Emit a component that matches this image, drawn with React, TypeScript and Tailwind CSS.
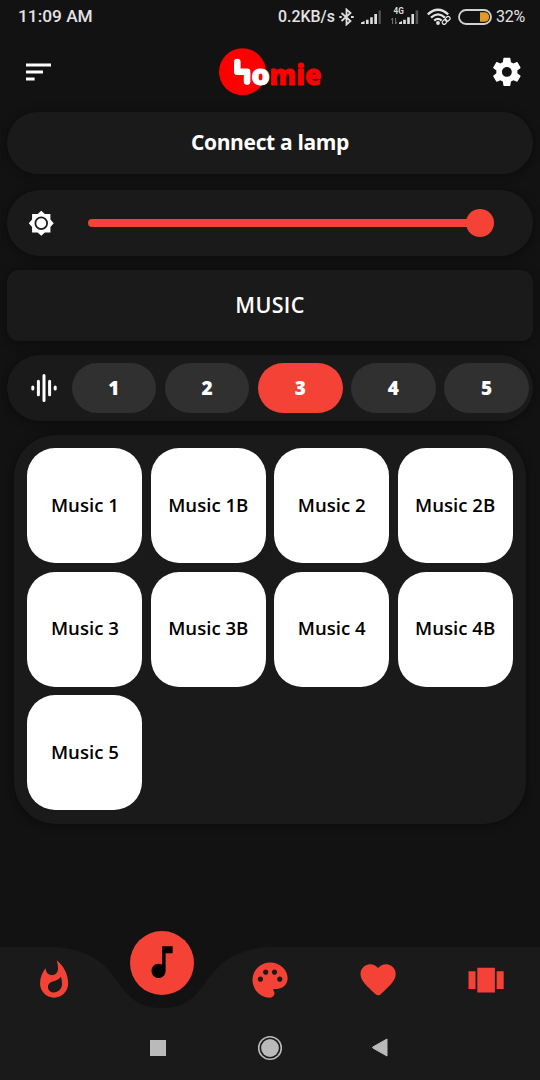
import type { ReactNode } from "react";
import { MdMusicNote } from "react-icons/md";

const levels = [1, 2, 3, 4, 5];
const tracks = ["Music 1", "Music 1B", "Music 2", "Music 2B", "Music 3", "Music 3B", "Music 4", "Music 4B", "Music 5"];

const CARD_SHADOW = "shadow-[0_1px_8px_2px_rgba(0,0,0,0.28)]";

function Signal() {
  return (
    <svg width="21" height="16" viewBox="0 0 21 16" fill="#dedede">
      <path d="M0 15v-1.6L3.6 12v3zM5 10.8h2.6V15H5zM9.2 8.2h2.6V15H9.2zM13.3 5h2.7v10h-2.7z" />
      <path d="M17.6 1.4h2.2V15h-2.2z" fill="#555" />
    </svg>
  );
}

function StatusBar() {
  return (
    <div className="flex h-[34px] shrink-0 items-center pr-[14px] pl-[18px] font-['Roboto',sans-serif] text-[#e2e2e2]">
      <span className="w-[260px] text-[17.3px] font-medium">11:09 AM</span>
      <span className="w-[61px] text-[15.9px] font-medium whitespace-nowrap">0.2KB/s</span>
      <svg className="w-[15px]" height="18" viewBox="0 0 15 18" fill="none" stroke="#dedede" strokeWidth="1.8">
        <path d="M2.5 5l9 8-4 3.5V1.5l4 3.5-9 8" />
        <path d="M.3 9h2.4M12 9h2.7" strokeWidth="2" />
      </svg>
      <span className="ml-[7px]"><Signal /></span>
      <svg className="ml-[8px]" width="31" height="20" viewBox="0 0 31 20" fill="#dedede">
        <text x="3.6" y="7.4" fontSize="8.2" fontWeight="700" fontFamily="Roboto">4G</text>
        <path d="M2.6 17V11M1.4 12.8L2.6 11M5.6 11v6M5.6 17l1.2-1.8" stroke="#777" fill="none" />
        <path d="M9 17v-1.6l3-1.4v3zM13.2 12.8h2.6V17h-2.6zM17.2 10.2h2.6V17h-2.6zM21.4 7h2.6v10h-2.6z" />
        <path d="M25.6 3.4h2.6V17h-2.6z" fill="#555" />
      </svg>
      <svg className="ml-[6px]" width="24" height="18" viewBox="0 0 24 18" fill="none" stroke="#e2e2e2">
        <path d="M.8 6.4Q11 -2.8 21.2 6.4" strokeWidth="2.3" />
        <path d="M4 9.6Q11 3.2 18 9.6" strokeWidth="2.3" />
        <path d="M7.2 12.6Q11 9.2 14.6 12.6" strokeWidth="2.3" />
        <circle cx="11" cy="15" r="1.9" fill="#e2e2e2" stroke="none" />
        <g transform="rotate(-45 19 12.5)" strokeWidth="1.2">
          <rect x="14.4" y="10.6" width="5.3" height="3.8" rx="1.9" />
          <rect x="18.6" y="10.6" width="5.3" height="3.8" rx="1.9" />
        </g>
      </svg>
      <svg className="ml-[7px]" width="34" height="16" viewBox="0 0 34 16">
        <rect x="1" y="1" width="32" height="14" rx="7" fill="none" stroke="#d2d2d2" strokeWidth="1.8" />
        <path d="M22 3.2h4.4a4.8 4.8 0 0 1 0 9.6H22z" fill="#e39a25" />
      </svg>
      <span className="ml-[4px] text-[16px] tracking-[-0.3px] whitespace-nowrap">32%</span>
    </div>
  );
}

function Logo() {
  return (
    <svg
      className="-ml-[2px] overflow-visible"
      width="104"
      height="48"
      viewBox="218 47.5 104 48"
      fontFamily="'Open Sans', sans-serif"
      fontWeight="800"
    >
      <circle cx="242.5" cy="71.3" r="23.5" fill="#fe0000" />
      <path d="M237.3 61.5v9.8h9.8v9.8" fill="none" stroke="#fff" strokeWidth="6.6" strokeLinecap="round" strokeLinejoin="round" />
      <text x="251.2" y="84.2" fontSize="29" fill="#fff" stroke="#fff" strokeWidth="0.8" textLength="18.8" lengthAdjust="spacingAndGlyphs">o</text>
      <text x="269.6" y="84.2" fontSize="28.5" fill="#fe0000" stroke="#fe0000" strokeWidth="0.8" strokeLinejoin="round" textLength="52" lengthAdjust="spacingAndGlyphs">mie</text>
    </svg>
  );
}

function MenuIcon() {
  return (
    <svg className="ml-1" width="25" height="18" viewBox="0 0 25 18" fill="#fff">
      <path d="M0 .5h25v3H0zM0 7.5h17v3H0zM0 14.5h8.6v3H0z" />
    </svg>
  );
}

function GearIcon() {
  return (
    <svg width="33.75" height="33.75" viewBox="0 0 24 24" fill="#fff">
      <path d="M19.43 12.98c.04-.32.07-.64.07-.98s-.03-.66-.07-.98l2.11-1.65c.19-.15.24-.42.12-.64l-2-3.46c-.12-.22-.39-.3-.61-.22l-2.49 1c-.52-.4-1.08-.73-1.69-.98l-.38-2.65C14.46 2.18 14.25 2 14 2h-4c-.25 0-.46.18-.49.42l-.38 2.65c-.61.25-1.17.59-1.69.98l-2.49-1c-.23-.09-.49 0-.61.22l-2 3.46c-.13.22-.07.49.12.64l2.11 1.65c-.04.32-.07.65-.07.98s.03.66.07.98l-2.11 1.65c-.19.15-.24.42-.12.64l2 3.46c.12.22.39.3.61.22l2.49-1c.52.4 1.08.73 1.69.98l.38 2.65c.03.24.24.42.49.42h4c.25 0 .46-.18.49-.42l.38-2.65c.61-.25 1.17-.59 1.69-.98l2.49 1c.23.09.49 0 .61-.22l2-3.46c.12-.22.07-.49-.12-.64l-2.11-1.65zM12 15.5c-1.93 0-3.5-1.57-3.5-3.5s1.57-3.5 3.5-3.5 3.5 1.57 3.5 3.5-1.57 3.5-3.5 3.5z" />
    </svg>
  );
}

function BrightnessIcon() {
  return (
    <svg width="26.5" height="26.5" viewBox="0 0 24 24" fill="#fff">
      <path d="M20.3 8.69V3.7h-4.99L12 .69 8.69 3.7H3.7v4.99L.69 12l3.01 3.31v4.99h4.99L12 23.31l3.31-3.01h4.99v-4.99L23.31 12z" />
      <circle cx="12" cy="12" r="5.3" fill="none" stroke="#1a1a1a" strokeWidth="1.6" />
    </svg>
  );
}

function WaveIcon() {
  return (
    <svg width="26" height="28" viewBox="0 0 26 28" stroke="#fff" strokeWidth="3" strokeLinecap="round">
      <path d="M1.8 13v2M7.4 7.2v13.6M13 1.5v25M18.6 7.2v13.6M24.2 13v2" />
    </svg>
  );
}

function NavIcon({ children }: { children: ReactNode }) {
  return (
    <div className="flex flex-1 justify-center">
      <svg width="42.2" height="42.2" viewBox="0 0 24 24" fill="#f44336">{children}</svg>
    </div>
  );
}

function BottomBar() {
  return (
    <div className="relative mt-auto h-[133px] shrink-0">
      <svg className="absolute inset-0" width="540" height="133" viewBox="0 0 540 133">
        <path d="M0 0H54C129.6 5 108 61 162 61S194.4 5 270 0H540V133H0Z" fill="#1a1a1a" />
      </svg>
      <div className="relative flex h-[67px] items-center">
        <NavIcon>
          <path d="M13.5.67s.74 2.65.74 4.8c0 2.06-1.35 3.73-3.41 3.73-2.07 0-3.63-1.67-3.63-3.73l.03-.36C5.21 7.51 4 10.62 4 14c0 4.42 3.58 8 8 8s8-3.58 8-8C20 8.61 17.41 3.8 13.5.67zM11.71 19c-1.78 0-3.22-1.4-3.22-3.14 0-1.62 1.05-2.76 2.81-3.12 1.77-.36 3.6-1.21 4.62-2.58.39 1.29.59 2.65.59 4.04 0 2.65-2.15 4.8-4.8 4.8z" />
        </NavIcon>
        <div className="flex flex-1 justify-center">
          <div className="mb-[36px] flex size-[64px] items-center justify-center rounded-full bg-[#f44336]">
            <MdMusicNote size={42.2} color="#000" />
          </div>
        </div>
        <NavIcon>
          <path d="M12 2C6.49 2 2 6.49 2 12s4.49 10 10 10c1.38 0 2.5-1.12 2.5-2.5 0-.61-.23-1.2-.64-1.67-.08-.1-.13-.21-.13-.33 0-.28.22-.5.5-.5H16c3.31 0 6-2.69 6-6 0-4.96-4.49-9-10-9zm5.5 11c-.83 0-1.5-.67-1.5-1.5s.67-1.5 1.5-1.5 1.5.67 1.5 1.5-.67 1.5-1.5 1.5zm-3-4c-.83 0-1.5-.67-1.5-1.5S13.67 6 14.5 6s1.5.67 1.5 1.5S15.33 9 14.5 9zM5 11.5c0-.83.67-1.5 1.5-1.5s1.5.67 1.5 1.5S7.33 13 6.5 13 5 12.33 5 11.5zm6-4c0 .83-.67 1.5-1.5 1.5S8 8.33 8 7.5 8.67 6 9.5 6s1.5.67 1.5 1.5z" />
        </NavIcon>
        <NavIcon>
          <path d="M13.35 20.13c-.76.69-1.93.69-2.69-.01l-.11-.1C5.3 15.27 1.87 12.16 2 8.28c.06-1.7.93-3.33 2.34-4.29 2.64-1.8 5.9-.96 7.66 1.1 1.76-2.06 5.02-2.91 7.66-1.1 1.41.96 2.28 2.59 2.34 4.29.14 3.88-3.3 6.99-8.55 11.76l-.1.09z" />
        </NavIcon>
        <NavIcon>
          <path d="M2 7h4v10H2V7zm5 12h10V5H7v14zM18 7h4v10h-4V7z" />
        </NavIcon>
      </div>
      <div className="relative flex h-[67px] items-center justify-between pr-[152px] pl-[150px]">
        <div className="size-4 bg-[#bababa]" />
        <svg className="ml-[1px]" width="26" height="26" viewBox="0 0 26 26" fill="#bababa">
          <circle cx="13" cy="13" r="11.3" fill="none" stroke="#bababa" strokeWidth="1.6" />
          <circle cx="13" cy="13" r="8.9" />
        </svg>
        <svg width="16" height="19" viewBox="0 0 16 19" fill="#bababa">
          <path d="M.8 9L15 1v17L.8 10z" stroke="#bababa" strokeLinejoin="round" />
        </svg>
      </div>
    </div>
  );
}

export default function App() {
  return (
    <div className="flex h-[1080px] w-[540px] flex-col overflow-hidden bg-[#121212] font-['Open_Sans',sans-serif] text-white">
      <StatusBar />
      <header className="flex h-[75px] shrink-0 items-center justify-between pr-4 pl-[22px]">
        <MenuIcon />
        <Logo />
        <GearIcon />
      </header>

      <main className="flex flex-col px-[7px] pt-[3px]">
        <button className={`h-[62px] rounded-full bg-[#1a1a1a] text-[21px] font-bold tracking-[-0.35px] ${CARD_SHADOW}`}>
          Connect a lamp
        </button>

        <div className={`mt-4 flex h-[66px] items-center rounded-full bg-[#1a1a1a] pr-[39px] pl-[21px] ${CARD_SHADOW}`}>
          <BrightnessIcon />
          <div className="ml-[33px] flex flex-1 items-center">
            <div className="h-[8.5px] flex-1 rounded-l-full bg-[#f44336]" />
            <div className="-ml-1 size-7 rounded-full bg-[#f44336]" />
          </div>
        </div>

        <div className={`mt-[14px] flex h-[71px] items-center justify-center rounded-xl bg-[#1a1a1a] text-[21.5px] font-semibold tracking-[0.3px] ${CARD_SHADOW}`}>
          MUSIC
        </div>

        <div className={`mt-[14px] flex h-[66px] items-center rounded-full bg-[#1a1a1a] pr-[4px] pl-[24px] ${CARD_SHADOW}`}>
          <WaveIcon />
          <div className="ml-[14.5px] flex flex-1 gap-[8.4px]">
            {levels.map((n) => (
              <button
                key={n}
                className={`h-[50px] flex-1 rounded-full text-[19px] font-extrabold ${n === 3 ? "bg-[#f44336]" : "bg-[#303030]"}`}
              >
                {n}
              </button>
            ))}
          </div>
        </div>

        <div className={`mx-[7px] mt-[14px] grid h-[389px] grid-cols-4 content-start gap-[8.4px] rounded-[42px] bg-[#1a1a1a] px-[13.4px] pt-[13.2px] ${CARD_SHADOW}`}>
          {tracks.map((t) => (
            <button key={t} className="h-[115px] rounded-[28px] bg-white pb-[2px] text-[18.6px] font-semibold whitespace-nowrap text-black">
              {t}
            </button>
          ))}
        </div>
      </main>

      <BottomBar />
    </div>
  );
}
